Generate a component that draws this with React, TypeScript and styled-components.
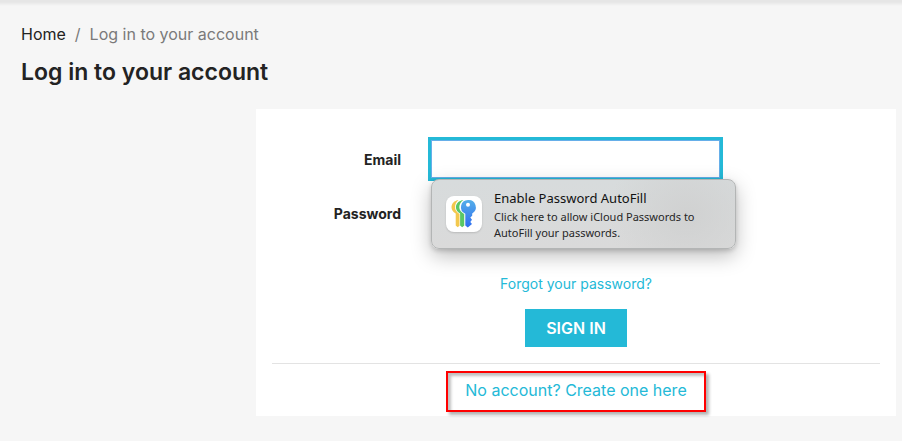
import React, { useState } from "react";
import styled, { createGlobalStyle } from "styled-components";

const accent = "#24b9d7";

const GlobalStyle = createGlobalStyle`
  *, *::before, *::after { box-sizing: border-box; }
  body {
    margin: 0;
    min-height: 100vh;
    color: #232323;
    background: #f6f6f6;
    font-family: Inter, "Liberation Sans", sans-serif;
    font-size: 15px;
    line-height: 24px;
  }
`;

const Page = styled.div`
  padding: 22px 6px 24px 21px;
  background: linear-gradient(#e6e6e6 2px, #f6f6f6 6px);
`;

const Breadcrumb = styled.ol`
  display: flex;
  gap: 9px;
  margin: 0;
  padding: 0;
  list-style: none;
  font-size: 16px;
  color: #7a7a7a;
`;

const HomeLink = styled.a`
  color: #232323;
  text-decoration: none;
`;

const Title = styled.h1`
  margin: 10px 0 21px;
  font-size: 23px;
  font-weight: 600;
  line-height: 32px;
`;

const Columns = styled.main`
  display: grid;
  grid-template-columns: 235px minmax(0, 1fr);
`;

const Panel = styled.section`
  grid-column: 2;
  padding: 31px 16px 4px;
  background: #fff;
`;

const LoginForm = styled.form`
  display: flex;
  flex-direction: column;
`;

const FieldRow = styled.div`
  display: grid;
  grid-template-columns: 129px minmax(0, 289px);
  column-gap: 30px;
  align-items: center;
  margin-bottom: 16px;
`;

const Label = styled.label`
  padding-top: 2px;
  text-align: right;
  font-size: 14px;
  font-weight: 700;
`;

const InputWrap = styled.div`
  position: relative;
`;

const Input = styled.input<{ $active?: boolean }>`
  display: block;
  width: 100%;
  height: 38px;
  padding: 8px 16px;
  border: 1px solid ${(p) => (p.$active ? "#66afe9" : "#d6d4d4")};
  border-radius: 0;
  outline: ${(p) => (p.$active ? `3px solid ${accent}` : "none")};
  background: #fff;
  color: #232323;
  font: inherit;
`;

const AutoFill = styled.button`
  position: absolute;
  z-index: 2;
  top: calc(100% + 1px);
  left: 0;
  display: flex;
  align-items: center;
  gap: 12px;
  width: 305px;
  height: 70px;
  padding: 0 14px;
  border: 1px solid #b3b5b5;
  border-radius: 8px;
  background: radial-gradient(ellipse 80px 70px at 255px 35px, #d0d1d1, transparent),
    linear-gradient(#d7dbdc, #dadada);
  box-shadow: 0 7px 20px rgba(0, 0, 0, 0.26), 0 2px 4px rgba(0, 0, 0, 0.16);
  color: #111;
  font-family: "Noto Sans", "Open Sans", sans-serif;
  text-align: left;
  cursor: pointer;
`;

const AutoFillTitle = styled.span`
  display: block;
  margin: 2px 0;
  font-size: 13px;
  line-height: 18px;
`;

const AutoFillText = styled.span`
  display: block;
  color: #262626;
  font-size: 11px;
  line-height: 16px;
  white-space: nowrap;
`;

const KeysIcon = styled.svg`
  flex: none;
  width: 36px;
  height: 36px;
  border-radius: 8px;
  background: #fff;
  box-shadow: 0 1px 2px rgba(0, 0, 0, 0.15);
`;

const TextLink = styled.a<{ $large?: boolean }>`
  color: ${accent};
  font-size: ${(p) => (p.$large ? 16 : 14)}px;
  text-decoration: none;
`;

const Forgot = styled.div`
  margin-top: 24px;
  text-align: center;
`;

const SubmitButton = styled.button`
  align-self: center;
  height: 38px;
  margin: 13px 0 16px;
  padding: 0 21px;
  border: 0;
  background: ${accent};
  color: #fff;
  font: inherit;
  font-size: 16px;
  font-weight: 600;
  text-transform: uppercase;
  cursor: pointer;
`;

const Divider = styled.hr`
  width: 100%;
  margin: 0 0 7px;
  border: 0;
  border-top: 1px solid #e3e3e3;
`;

const Highlight = styled.div`
  width: fit-content;
  height: 41px;
  margin: 0 auto;
  padding: 5px 17px;
  border: 2px solid #f00;
  box-shadow: 3px 3px 3px rgba(0, 0, 0, 0.3), inset 3px 3px 3px rgba(0, 0, 0, 0.25);
`;

function PasswordKeys() {
  return (
    <KeysIcon viewBox="0 0 36 36" aria-hidden="true">
      <defs>
        <linearGradient id="blueKey" x1="0" y1="0" x2="0" y2="1">
          <stop offset="0" stopColor="#55afe9" />
          <stop offset="1" stopColor="#2f6df0" />
        </linearGradient>
      </defs>
      <path d="M12.500 4C8.300 4.600 5.500 7.700 5.500 11.300c0 2.500 1.500 4.600 4.200 6.200V29.500l2 1.800 1.800-1.500V18C10.600 16 9 14 9 11.300 9 8.500 10.300 6 12.500 4z" fill="#f3c84e" />
      <path d="M17.300 4c-4.400.6-7.400 3.700-7.400 7.300 0 2.500 1.500 4.600 4.200 6.200V29.500l2.100 1.800 2.100-1.800V18c-3.200-1.900-5-4-5-6.700 0-2.800 1.500-5.300 4-7.300z" fill="#5ac765" />
      <path fillRule="evenodd" d="M22 4a7.200 7.200 0 0 0-2.700 13.800V29.500l2.500 2 4.200-3.500-1.700-2 1.700-2.200-1.700-2.200 1.900-1.800v-2.400A7.200 7.200 0 0 0 22 4zm0 2.800a2 2 0 1 1 0 4 2 2 0 0 1 0-4z" fill="url(#blueKey)" stroke="#fff" strokeWidth="1" paintOrder="stroke" />
    </KeysIcon>
  );
}

export default function App() {
  const [email, setEmail] = useState("");
  const [password, setPassword] = useState("");

  return (
    <>
      <GlobalStyle />
      <Page>
        <nav aria-label="Breadcrumb">
          <Breadcrumb>
            <li><HomeLink href="#home">Home</HomeLink></li>
            <li aria-hidden="true">/</li>
            <li aria-current="page">Log in to your account</li>
          </Breadcrumb>
        </nav>
        <Title>Log in to your account</Title>
        <Columns>
          <Panel>
            <LoginForm onSubmit={(e) => e.preventDefault()}>
              <FieldRow>
                <Label htmlFor="email">Email</Label>
                <InputWrap>
                  <Input id="email" type="email" $active value={email} onChange={(e) => setEmail(e.target.value)} />
                  <AutoFill type="button">
                    <PasswordKeys />
                    <span>
                      <AutoFillTitle>Enable Password AutoFill</AutoFillTitle>
                      <AutoFillText>Click here to allow iCloud Passwords to<br />AutoFill your passwords.</AutoFillText>
                    </span>
                  </AutoFill>
                </InputWrap>
              </FieldRow>
              <FieldRow>
                <Label htmlFor="password">Password</Label>
                <Input id="password" type="password" value={password} onChange={(e) => setPassword(e.target.value)} />
              </FieldRow>
              <Forgot><TextLink href="#forgot">Forgot your password?</TextLink></Forgot>
              <SubmitButton type="submit">Sign in</SubmitButton>
            </LoginForm>
            <Divider />
            <Highlight><TextLink $large href="#register">No account? Create one here</TextLink></Highlight>
          </Panel>
        </Columns>
      </Page>
    </>
  );
}
